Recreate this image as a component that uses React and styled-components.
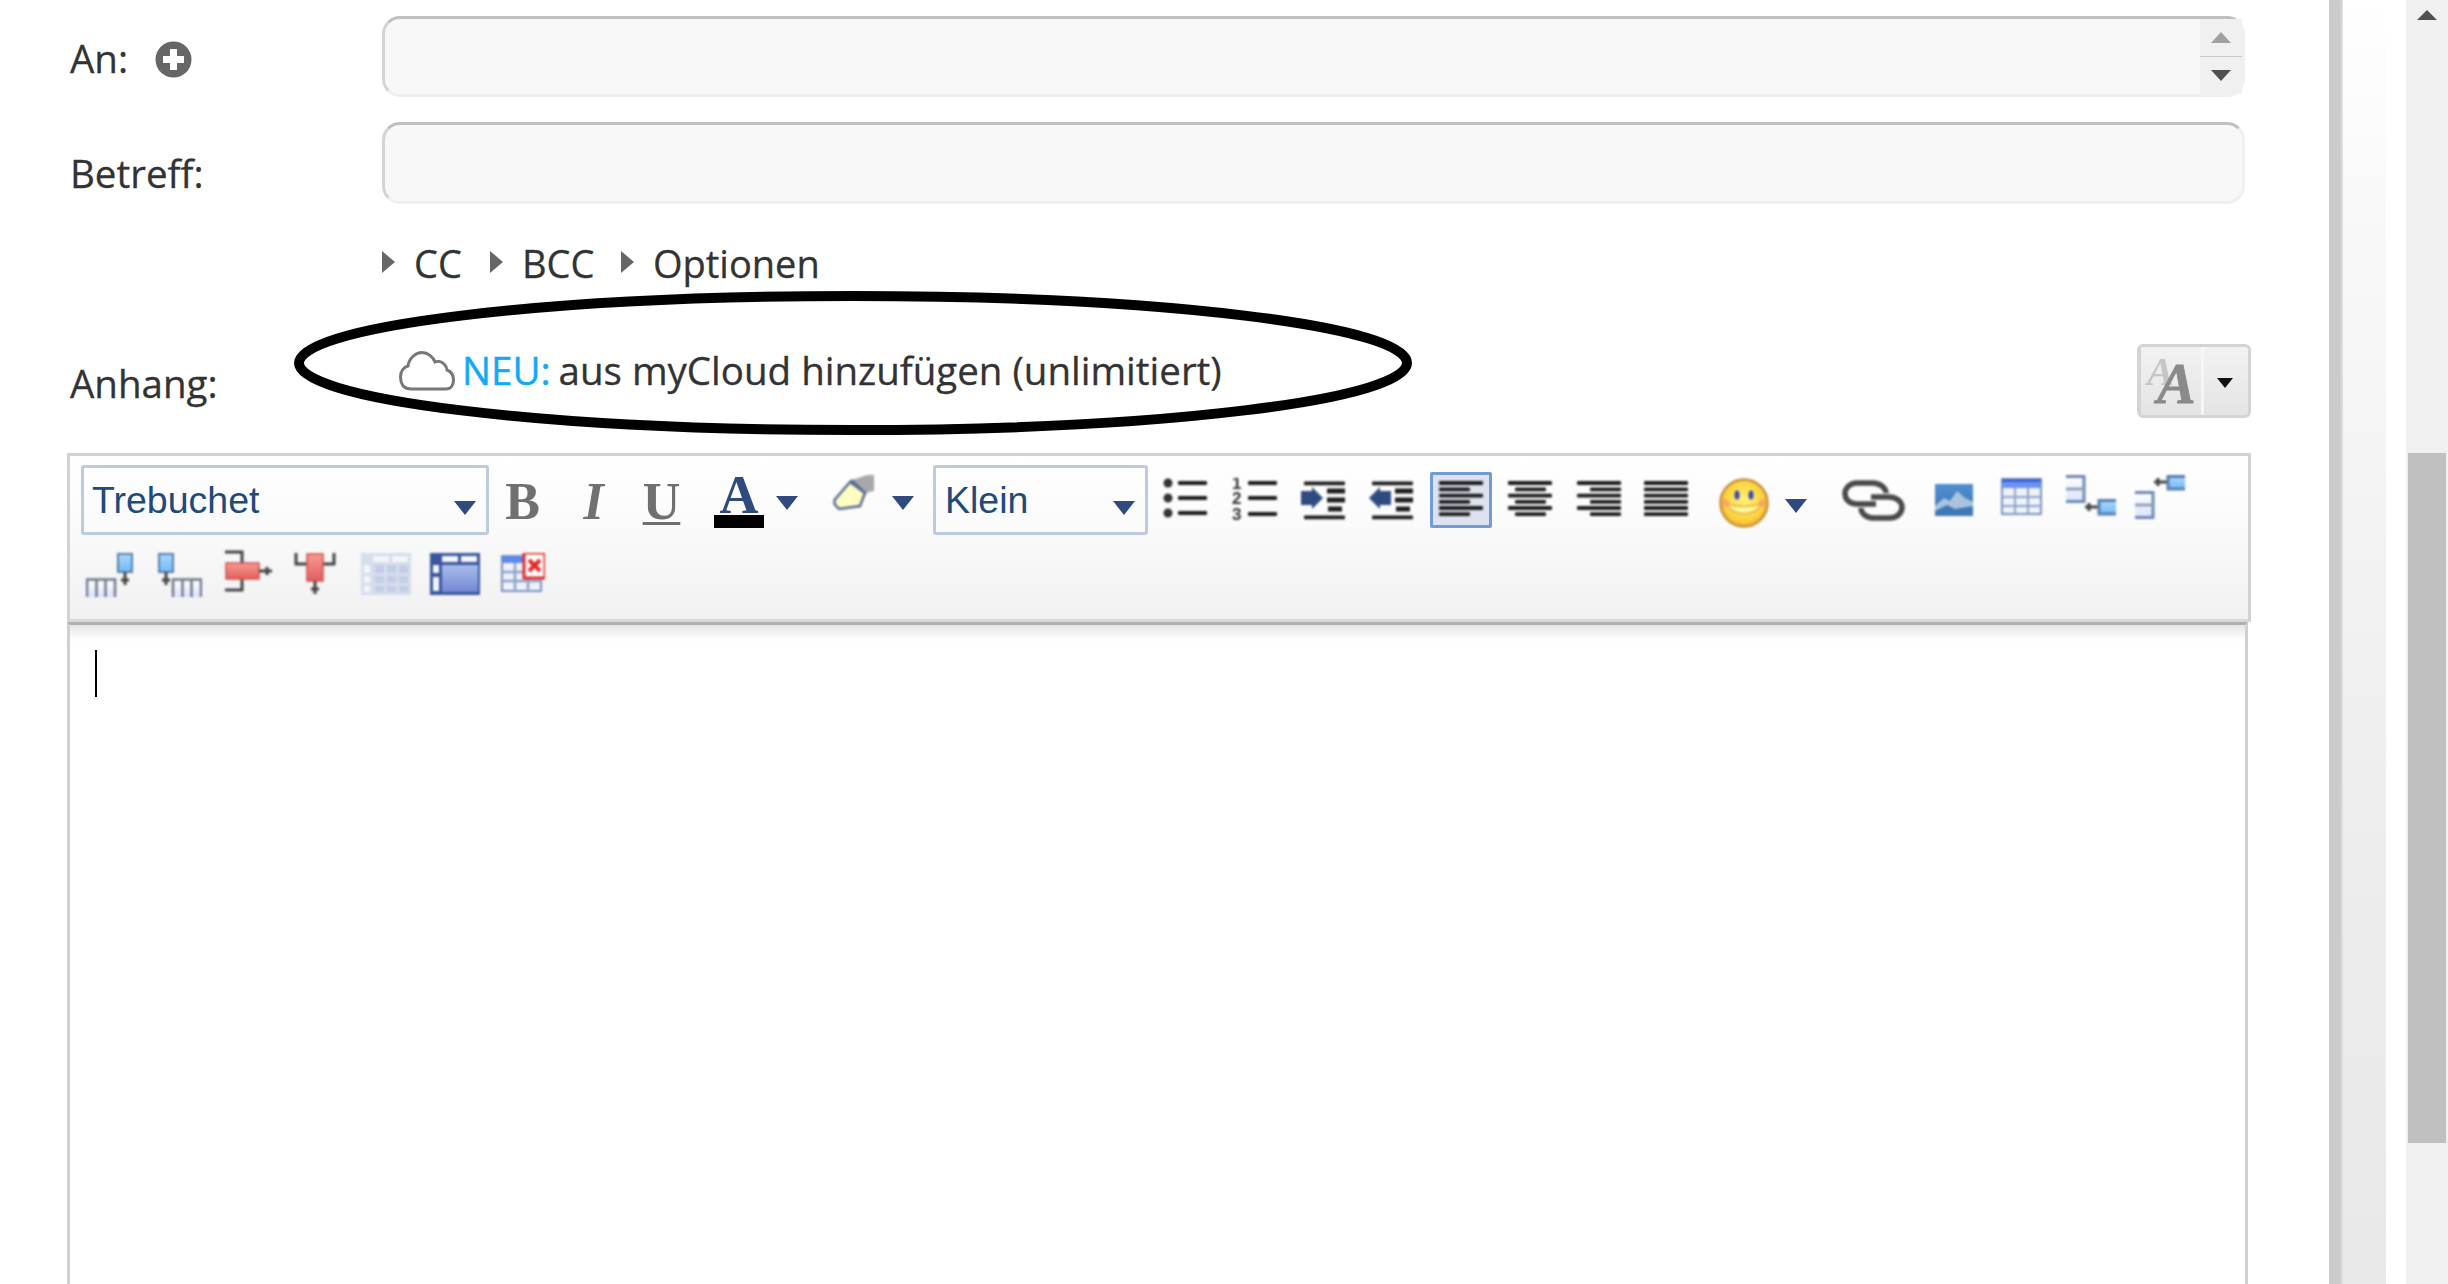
import React from 'react';
import styled, { createGlobalStyle } from 'styled-components';

const GlobalStyle = createGlobalStyle`
  html, body {
    margin: 0;
    padding: 0;
    background: #fff;
    overflow: hidden;
  }
`;

const Page = styled.div`
  display: flex;
  width: 2448px;
  height: 1284px;
  overflow: hidden;
  position: relative;
  font-family: 'Open Sans', 'Liberation Sans', sans-serif;
  color: #333;
`;

const Main = styled.div`
  flex: 0 0 2329px;
  box-sizing: border-box;
  padding: 16px 78px 0 67px;
  display: flex;
  flex-direction: column;
`;

const Strip = styled.div`
  flex: 0 0 14px;
  background: linear-gradient(90deg, #cbcbcb 0, #cbcbcb 11px, #e4e4e4 100%);
`;

const SidePanel = styled.div`
  flex: 0 0 43px;
  background: linear-gradient(180deg, #fff 0, #f9f9f9 200px, #ececec 900px, #e9e9e9 100%);
`;

const Gutter = styled.div`
  flex: 0 0 20px;
`;

const Scrollbar = styled.div`
  flex: 0 0 42px;
  background: #f0f0f0;
  padding-top: 10px;
  box-sizing: border-box;
`;

const ScrollArrow = styled.div`
  width: 0;
  height: 0;
  margin-left: 11px;
  border-left: 10px solid transparent;
  border-right: 10px solid transparent;
  border-bottom: 10px solid #505050;
`;

const ScrollThumb = styled.div`
  width: 38px;
  height: 690px;
  margin: 433px 0 0 2px;
  background: #c0c0c0;
`;

const Row = styled.div`
  display: grid;
  grid-template-columns: 315px 1fr;
  margin-top: ${(p) => p.$top || 0}px;
`;

const Label = styled.div`
  display: flex;
  align-items: flex-start;
  gap: 27px;
  padding: ${(p) => p.$pad || 0}px 0 0 3px;
  font-size: 38.5px;
  line-height: 46px;
  color: #333;
  -webkit-text-stroke: 0.3px #333;
`;

const PlusIcon = styled.svg`
  width: 37px;
  height: 37px;
  margin-top: 6px;
`;

const InputBox = styled.div`
  position: relative;
  box-sizing: border-box;
  width: 1863px;
  height: ${(p) => p.$h}px;
  margin-right: 6px;
  background: #f8f8f8;
  border-radius: 18px;
  border: 3px solid #f0f0f0;
  border-top-color: #c0c0c0;
  border-left-color: #d4d4d4;
`;

const Spinner = styled.div`
  position: absolute;
  top: 0;
  right: 0;
  bottom: 0;
  width: 42px;
  background: #f0f0f0;
  display: flex;
  flex-direction: column;
  align-items: center;
`;

const SpinHalf = styled.div`
  flex: 1;
  align-self: stretch;
  display: flex;
  align-items: center;
  justify-content: center;
  border-top: ${(p) => (p.$divider ? '1px solid #c8c8c8' : 'none')};
`;

const SpinArrow = styled.div`
  width: 0;
  height: 0;
  border-left: 10px solid transparent;
  border-right: 10px solid transparent;
  border-bottom: ${(p) => (p.$up ? '11px solid #a0a0a0' : 'none')};
  border-top: ${(p) => (p.$up ? 'none' : '11px solid #505050')};
`;

const Options = styled.div`
  display: flex;
  align-items: center;
  margin: 39px 0 0 315px;
  height: 40px;
  font-size: 38px;
  line-height: 40px;
  color: #333;
  -webkit-text-stroke: 0.3px #333;
`;

const OptionItem = styled.div`
  flex: 0 0 ${(p) => p.$w}px;
  display: flex;
  align-items: center;
`;

const Caret = styled.span`
  width: 0;
  height: 0;
  margin: -2px 19px 0 0;
  border-top: 11px solid transparent;
  border-bottom: 11px solid transparent;
  border-left: 13px solid #666;
`;

const AttachRow = styled.div`
  display: grid;
  grid-template-columns: 315px 1fr auto;
  margin-top: 61px;
  height: 74px;
`;

const AttachLink = styled.div`
  display: flex;
  align-items: flex-start;
  padding: 0 0 0 17px;
  margin-top: 3px;
  font-size: 38.5px;
  line-height: 46px;
  color: #333;
  -webkit-text-stroke: 0.3px #333;
`;

const CloudIcon = styled.svg`
  width: 56px;
  height: 40px;
  margin: 4px 7px 0 0;
  filter: blur(0.5px);
`;

const New = styled.span`
  color: #12a9f7;
  -webkit-text-stroke: 0.4px #12a9f7;
  margin-right: 8px;
`;

const FontButton = styled.div`
  box-sizing: border-box;
  width: 114px;
  height: 74px;
  display: flex;
  border: 3px solid #d4d4d4;
  border-radius: 6px;
  background: linear-gradient(180deg, #f2f2f2, #e4e4e4);
`;

const FontFace = styled.div`
  flex: 0 0 61px;
  position: relative;
  border-right: 3px solid #f6f6f6;
  box-shadow: 1px 0 0 #d4d4d4 inset;
  filter: blur(0.7px);
`;

const FaceLetter = styled.span`
  position: absolute;
  left: ${(p) => p.$left}px;
  top: ${(p) => p.$at}px;
  font-family: 'Liberation Serif', serif;
  font-weight: bold;
  font-style: italic;
  font-size: ${(p) => p.$size}px;
  line-height: 1;
  color: ${(p) => p.$color};
  -webkit-text-stroke: ${(p) => p.$weight || 0}px ${(p) => p.$color};
`;

const FontArrow = styled.div`
  margin: 31px 0 0 13px;
  width: 0;
  height: 0;
  border-left: 8px solid transparent;
  border-right: 8px solid transparent;
  border-top: 10px solid #111;
`;

const Toolbar = styled.div`
  box-sizing: border-box;
  margin-top: 35px;
  height: 169px;
  border: 3px solid #d2d2d2;
  border-bottom-color: #d8d8d8;
  background: linear-gradient(180deg, #fff 0, #fafafa 45%, #f1f1f1 100%);
  padding: 9px 0 0 11px;
`;

const ToolRow = styled.div`
  display: flex;
  align-items: flex-start;
  height: ${(p) => p.$h}px;
  margin-top: ${(p) => p.$top || 0}px;
`;

const Select = styled.div`
  box-sizing: border-box;
  flex: 0 0 ${(p) => p.$w}px;
  margin-left: ${(p) => p.$gap || 0}px;
  height: 70px;
  border: 3px solid #bccbe0;
  border-radius: 3px;
  display: flex;
  align-items: flex-start;
  justify-content: space-between;
  padding: 0 10px 0 ${(p) => p.$pad}px;
  font-family: 'Liberation Sans', Arial, sans-serif;
  font-size: 37.5px;
  line-height: 64px;
  color: #204a78;
`;

const DropArrow = styled.span`
  flex: 0 0 auto;
  display: block;
  width: 0;
  height: 0;
  margin-left: ${(p) => p.$gap || 0}px;
  margin-top: ${(p) => p.$top || 0}px;
  border-left: 11px solid transparent;
  border-right: 11px solid transparent;
  border-top: 14px solid #2f4a7f;
  filter: blur(0.5px);
`;

const Letter = styled.span`
  flex: 0 0 ${(p) => p.$w}px;
  min-width: 0;
  display: flex;
  justify-content: center;
  margin-left: ${(p) => p.$gap}px;
  margin-top: ${(p) => p.$top}px;
  font-family: 'Liberation Serif', serif;
  font-weight: bold;
  font-style: ${(p) => (p.$italic ? 'italic' : 'normal')};
  text-decoration: ${(p) => (p.$under ? 'underline' : 'none')};
  text-decoration-thickness: 3px;
  text-underline-offset: 3px;
  font-size: 52px;
  line-height: 52px;
  color: #707070;
  filter: blur(0.7px);
`;

const ColorTool = styled.div`
  flex: 0 0 50px;
  margin-left: 35px;
  display: flex;
  flex-direction: column;
  align-items: center;
`;

const ColorLetter = styled.span`
  font-family: 'Liberation Serif', serif;
  font-weight: bold;
  font-size: 54px;
  line-height: 54px;
  margin-top: 3px;
  color: #2f4a7f;
  filter: blur(0.6px);
`;

const ColorBar = styled.div`
  align-self: stretch;
  height: 13px;
  margin-top: -7px;
  background: #000;
`;

const Glyph = styled.svg`
  flex: 0 0 auto;
  display: block;
  margin-left: ${(p) => p.$gap || 0}px;
  margin-top: ${(p) => p.$top || 0}px;
  filter: blur(0.8px);
`;

const LineSvg = styled.svg`
  display: block;
  filter: blur(0.8px);
`;

const ActiveBox = styled.div`
  box-sizing: border-box;
  flex: 0 0 62px;
  height: 56px;
  margin: 7px 0 0 16px;
  border: 3px solid #6f9bd6;
  border-radius: 2px;
  background: #dde2ee;
  padding: 5px 0 0 6px;
`;

const Editor = styled.div`
  flex: 1;
  box-sizing: border-box;
  width: 2181px;
  border: 3px solid #d0d0d0;
  border-top-color: #b0b0b0;
  border-bottom: none;
  padding: 25px;
  background: linear-gradient(180deg, #e6e6e6 0, #fdfdfd 14px, #fff 20px);
`;

const TextCursor = styled.div`
  width: 2px;
  height: 47px;
  background: #000;
`;

const Ring = styled.svg`
  position: absolute;
  left: 285px;
  top: 282px;
  width: 1136px;
  height: 163px;
  pointer-events: none;
`;

// svg helper: viewBox is in screen pixels
const Ico = ({ w, h, gap, top, children }) => (
  <Glyph $gap={gap} $top={top} width={w} height={h} viewBox={`0 0 ${w} ${h}`}>
    {children}
  </Glyph>
);

const Lines = ({ kind }) => {
  const ys = [3, 9.4, 15.6, 21.8, 28, 34.2];
  return (
    <g fill="#1c1c1c">
      {ys.map((y, i) => {
        const short = i % 2 === 1 && kind !== 'justify';
        const w = short ? 31 : 44;
        const x = !short ? 0 : kind === 'left' ? 0 : kind === 'center' ? 7 : 13;
        return <rect key={y} x={x} y={y - 1.9} width={w} height={3.8} rx={1} />;
      })}
    </g>
  );
};

const Defs = () => (
  <svg width="0" height="0" style={{ position: 'absolute' }}>
    <defs>
      <linearGradient id="paleBox" x1="0" y1="0" x2="0" y2="1">
        <stop offset="0" stopColor="#ffffff" />
        <stop offset="1" stopColor="#dbe4fb" />
      </linearGradient>
      <linearGradient id="blueBox" x1="0" y1="0" x2="0" y2="1">
        <stop offset="0" stopColor="#a9d8ff" />
        <stop offset="1" stopColor="#72baf5" />
      </linearGradient>
      <linearGradient id="redBox" x1="0" y1="0" x2="0" y2="1">
        <stop offset="0" stopColor="#f79a92" />
        <stop offset="1" stopColor="#e35f5a" />
      </linearGradient>
      <linearGradient id="sky" x1="0" y1="0" x2="0" y2="1">
        <stop offset="0" stopColor="#4f8fcf" />
        <stop offset="1" stopColor="#3a76b8" />
      </linearGradient>
      <linearGradient id="deepBlue" x1="0" y1="0" x2="0" y2="1">
        <stop offset="0" stopColor="#a9bcec" />
        <stop offset="1" stopColor="#7388d3" />
      </linearGradient>
      <radialGradient id="smile" cx="0.5" cy="0.45" r="0.6">
        <stop offset="0" stopColor="#fff07a" />
        <stop offset="0.7" stopColor="#fbd23e" />
        <stop offset="1" stopColor="#f0a52a" />
      </radialGradient>
    </defs>
  </svg>
);

const BulletsIcon = () => (
  <Ico w={47} h={44} gap={15} top={13}>
    {[5, 20, 35].map((y) => (
      <g key={y}>
        <circle cx={5} cy={y} r={4.5} fill="#333" />
        <rect x={15} y={y - 1.9} width={29} height={3.8} rx={1} fill="#1c1c1c" />
      </g>
    ))}
  </Ico>
);

const NumbersIcon = () => (
  <Ico w={45} h={46} gap={22} top={13}>
    {[
      ['1', 5],
      ['2', 20],
      ['3', 36],
    ].map(([n, y]) => (
      <g key={n}>
        <text x={0} y={y + 6} fontFamily="Liberation Sans" fontWeight="bold" fontSize="17" fill="#333">
          {n}
        </text>
        <rect x={16} y={y - 1.9} width={29} height={3.8} rx={1} fill="#1c1c1c" />
      </g>
    ))}
  </Ico>
);

const IndentIcon = ({ gap, out }) => (
  <Ico w={45} h={40} gap={gap} top={15}>
    <g fill="#1c1c1c">
      <rect x={3} y={1.5} width={41} height={3.8} rx={1} />
      <rect x={3} y={35.5} width={41} height={3.8} rx={1} />
      <rect x={26} y={8.5} width={18} height={5} />
      <rect x={26} y={17.5} width={18} height={5} />
      <rect x={27} y={26.5} width={14} height={5} />
    </g>
    <polygon
      fill="#2f4a7f"
      points={out ? '0,18 11,7 11,11 22,11 22,25 11,25 11,29' : '0,11 11,11 11,7 22,18 11,29 11,25 0,25'}
    />
  </Ico>
);

const HighlightIcon = () => (
  <Ico w={41} h={36} gap={35} top={9}>
    <path d="M1.5 26 L17 8 L32 19 L27 32 L6 35 L1.5 30 Z" fill="#fdfdc0" stroke="#5a6d94" strokeWidth={2.5} />
    <path d="M19 6 L34 1 L41 1 L41 17 L32 19 Z" fill="#a8a8a8" />
    <path d="M18 6 L33 20" stroke="#5a6d94" strokeWidth={3} />
  </Ico>
);

const SmileyIcon = () => (
  <Ico w={50} h={50} gap={31} top={13}>
    <circle cx={25} cy={25} r={23.5} fill="url(#smile)" stroke="#c99236" strokeWidth={2.5} />
    <ellipse cx={18} cy={17} rx={2.5} ry={4.5} fill="#3a4bb0" />
    <ellipse cx={32} cy={17} rx={2.5} ry={4.5} fill="#3a4bb0" />
    <path d="M9 26 C15 29 35 29 41 26 C39 39 11 39 9 26 Z" fill="#fff59a" stroke="#e0a02c" strokeWidth={1.2} />
    <circle cx={6} cy={25} r={4} fill="#f59a62" opacity={0.7} />
    <circle cx={44} cy={25} r={4} fill="#f59a62" opacity={0.7} />
  </Ico>
);

const LinkIcon = () => (
  <Ico w={63} h={41} gap={35} top={15}>
    <g fill="none" stroke="#4a4a4a" strokeWidth={5.5}>
      <path d="M34 24 H15 C7 24 3 19 3 13.5 C3 8 8 3 15 3 H31 C38 3 44 8 44 13" />
      <path d="M29 17 H47 C55 17 60 22 60 27.5 C60 33 55 38 47 38 H31 C24 38 19 33 19 28" />
    </g>
  </Ico>
);

const ImageIcon = () => (
  <Ico w={38} h={32} gap={30} top={19}>
    <rect width={38} height={32} fill="url(#sky)" />
    <path d="M0 22 L9 14 L15 17 L22 7 L30 14 L38 18 L38 32 L0 32 Z" fill="#a9c4de" />
    <path d="M0 27 L12 21 L20 25 L38 22 L38 32 L0 32 Z" fill="#3f78b4" />
  </Ico>
);

const TableIcon = ({ gap }) => (
  <Ico w={41} h={38} gap={gap} top={13}>
    <rect x={1} y={1} width={39} height={35} fill="#eef2fb" stroke="#7b93bf" strokeWidth={2} />
    <rect x={1} y={1} width={39} height={9} fill="#6c93ee" />
    <rect x={1} y={1} width={39} height={3} fill="#3d62d8" />
    <path d="M14 10 V36 M27 10 V36 M1 19 H40 M1 28 H40" stroke="#8ea3c9" strokeWidth={2} />
  </Ico>
);

const RowBeforeIcon = () => (
  <Ico w={50} h={42} gap={24} top={10}>
    <path d="M0 1.5 H18 V26.5 H0" fill="url(#paleBox)" stroke="#6d89b3" strokeWidth={3} />
    <path d="M0 14 H18" stroke="#8ea0bb" strokeWidth={3} />
    <path d="M19 32 H32 M23 28 V36" stroke="#444" strokeWidth={3} />
    <path d="M50 25.5 H33 V39 H50" fill="url(#blueBox)" stroke="#5a80ae" strokeWidth={3} />
  </Ico>
);

const RowAfterIcon = () => (
  <Ico w={50} h={44} gap={19} top={10}>
    <path d="M0 17.5 H18 V42.5 H0" fill="url(#paleBox)" stroke="#6d89b3" strokeWidth={3} />
    <path d="M0 30 H18" stroke="#8ea0bb" strokeWidth={3} />
    <path d="M19 7 H32 M23 3 V11" stroke="#444" strokeWidth={3} />
    <path d="M50 1.5 H33 V14 H50" fill="url(#blueBox)" stroke="#5a80ae" strokeWidth={3} />
  </Ico>
);

const ColLeftIcon = () => (
  <Ico w={47} h={44} gap={5} top={3}>
    <path d="M1 44 V26.5 H29 V44 M10.5 27 V44 M19.5 27 V44" fill="url(#paleBox)" stroke="#707a8a" strokeWidth={2.5} />
    <rect x={32} y={1} width={14} height={18} fill="url(#blueBox)" stroke="#5a80ae" strokeWidth={2} />
    <path d="M39 19 V32 M35 27 H43" stroke="#444" strokeWidth={3} />
  </Ico>
);

const ColRightIcon = () => (
  <Ico w={44} h={44} gap={25} top={3}>
    <path d="M15 44 V26.5 H43 V44 M24.5 27 V44 M33.5 27 V44" fill="url(#paleBox)" stroke="#707a8a" strokeWidth={2.5} />
    <rect x={1} y={1} width={14} height={18} fill="url(#blueBox)" stroke="#5a80ae" strokeWidth={2} />
    <path d="M8 19 V32 M4 27 H12" stroke="#444" strokeWidth={3} />
  </Ico>
);

const DelColIcon = () => (
  <Ico w={48} h={42} gap={23} top={0}>
    <path d="M0 2 H17 V13 M17 29 V40 H0" fill="none" stroke="#444" strokeWidth={3} />
    <rect x={1} y={13} width={33} height={16} fill="url(#redBox)" stroke="#d0524e" strokeWidth={1.5} />
    <path d="M34 21 H47 M42 17 V25" stroke="#444" strokeWidth={3} />
  </Ico>
);

const DelRowIcon = () => (
  <Ico w={42} h={41} gap={21} top={3}>
    <path d="M2 0 V11 H13 M29 11 H40 V0" fill="none" stroke="#444" strokeWidth={3} />
    <rect x={13} y={1} width={16} height={27} fill="url(#redBox)" stroke="#d0524e" strokeWidth={1.5} />
    <path d="M21 28 V41 M17 36 H25" stroke="#444" strokeWidth={3} />
  </Ico>
);

const GridPaleIcon = () => (
  <Ico w={50} h={42} gap={25} top={3}>
    <rect width={50} height={42} fill="#d6dded" />
    <path d="M12 3 H28 V9 H12 Z M31 3 H47 V9 H31 Z M3 12 H9 V20 H3 Z M3 23 H9 V30 H3 Z M3 33 H9 V39 H3 Z" fill="#f3f5fa" />
    <path d="M14 12 H23 V20 H14 Z M26 12 H35 V20 H26 Z M38 12 H47 V20 H38 Z M14 23 H23 V30 H14 Z M26 23 H35 V30 H26 Z M38 23 H47 V30 H38 Z M14 33 H23 V39 H14 Z M26 33 H35 V39 H26 Z M38 33 H47 V39 H38 Z" fill="#c3cee4" />
  </Ico>
);

const GridHeadIcon = () => (
  <Ico w={50} h={42} gap={19} top={3}>
    <rect width={50} height={42} fill="#3a569f" />
    <path d="M12 3 H28 V9 H12 Z M31 3 H47 V9 H31 Z M3 12 H9 V20 H3 Z M3 24 H9 V38 H3 Z" fill="#f3f5fa" />
    <rect x={12} y={12} width={36} height={27} fill="url(#deepBlue)" />
  </Ico>
);

const GridDelIcon = () => (
  <Ico w={44} h={40} gap={21} top={3}>
    <rect x={1} y={3} width={39} height={35} fill="#eef2fb" stroke="#7b93bf" strokeWidth={2} />
    <rect x={1} y={3} width={39} height={7} fill="#5f8aeb" />
    <path d="M14 10 V38 M27 10 V38 M1 19 H40 M1 28 H40" stroke="#8ea3c9" strokeWidth={2.5} />
    <rect x={23} y={0} width={21} height={25} fill="#fff" stroke="#e12a2a" strokeWidth={3} />
    <path d="M28 7 L39 18 M39 7 L28 18" stroke="#e12a2a" strokeWidth={4} />
  </Ico>
);

const App = () => (
  <Page>
    <GlobalStyle />
    <Defs />
    <Main>
      <Row>
        <Label $pad={19}>
          An:
          <PlusIcon viewBox="0 0 37 37">
            <circle cx="18.5" cy="18.5" r="18" fill="#666" />
            <path d="M18.5 8 V29 M8 18.5 H29" stroke="#fff" strokeWidth="7" />
          </PlusIcon>
        </Label>
        <InputBox $h={81}>
          <Spinner>
            <SpinHalf>
              <SpinArrow $up />
            </SpinHalf>
            <SpinHalf $divider>
              <SpinArrow />
            </SpinHalf>
          </Spinner>
        </InputBox>
      </Row>
      <Row $top={25}>
        <Label $pad={28}>Betreff:</Label>
        <InputBox $h={82} />
      </Row>
      <Options>
        <OptionItem $w={108}>
          <Caret />
          CC
        </OptionItem>
        <OptionItem $w={131}>
          <Caret />
          BCC
        </OptionItem>
        <OptionItem $w={240}>
          <Caret />
          Optionen
        </OptionItem>
      </Options>
      <AttachRow>
        <Label $pad={16}>Anhang:</Label>
        <AttachLink>
          <CloudIcon viewBox="0 0 56 40">
            <path
              d="M12 38 C4 38 1.5 32 1.5 26 C1.5 20 5 16 9 15 C10 7 17 1.5 23 1.5 C29 1.5 34 6 36 11 C38 10 42 10 45 13 C47 15 48 17 48 19 C53 21 54.5 25 54.5 29 C54.5 34 52 38 47 38 Z"
              fill="none"
              stroke="#777"
              strokeWidth="3"
            />
          </CloudIcon>
          <New>NEU:</New>
          aus myCloud hinzufügen (unlimitiert)
        </AttachLink>
        <FontButton>
          <FontFace>
            <FaceLetter $left={7} $at={5} $size={40} $color="#c6c6c6">
              A
            </FaceLetter>
            <FaceLetter $left={17} $at={8} $size={58} $color="#8a8a8a" $weight={0.8}>
              A
            </FaceLetter>
          </FontFace>
          <FontArrow />
        </FontButton>
      </AttachRow>
      <Toolbar>
        <ToolRow $h={70}>
          <Select $w={408} $pad={8}>
            Trebuchet
            <DropArrow $top={33} />
          </Select>
          <Letter $w={31} $gap={18} $top={11}>
            B
          </Letter>
          <Letter $w={27} $gap={42} $top={11} $italic>
            I
          </Letter>
          <Letter $w={35} $gap={37} $top={11} $under>
            U
          </Letter>
          <ColorTool>
            <ColorLetter>A</ColorLetter>
            <ColorBar />
          </ColorTool>
          <DropArrow $gap={12} $top={31} />
          <HighlightIcon />
          <DropArrow $gap={18} $top={31} />
          <Select $w={215} $gap={19} $pad={9}>
            Klein
            <DropArrow $top={33} />
          </Select>
          <BulletsIcon />
          <NumbersIcon />
          <IndentIcon gap={24} />
          <IndentIcon gap={23} out />
          <ActiveBox>
            <LineSvg width={44} height={38} viewBox="0 0 44 38">
              <Lines kind="left" />
            </LineSvg>
          </ActiveBox>
          <Ico w={44} h={38} gap={16} top={15}>
            <Lines kind="center" />
          </Ico>
          <Ico w={44} h={38} gap={25} top={15}>
            <Lines kind="right" />
          </Ico>
          <Ico w={44} h={38} gap={23} top={15}>
            <Lines kind="justify" />
          </Ico>
          <SmileyIcon />
          <DropArrow $gap={16} $top={34} />
          <LinkIcon />
          <ImageIcon />
          <TableIcon gap={28} />
          <RowBeforeIcon />
          <RowAfterIcon />
        </ToolRow>
        <ToolRow $h={60} $top={15}>
          <ColLeftIcon />
          <ColRightIcon />
          <DelColIcon />
          <DelRowIcon />
          <GridPaleIcon />
          <GridHeadIcon />
          <GridDelIcon />
        </ToolRow>
      </Toolbar>
      <Editor>
        <TextCursor />
      </Editor>
    </Main>
    <Strip />
    <SidePanel />
    <Gutter />
    <Scrollbar>
      <ScrollArrow />
      <ScrollThumb />
    </Scrollbar>
    <Ring viewBox="0 0 1136 163">
      <ellipse cx="568" cy="81" rx="554" ry="67" fill="none" stroke="#000" strokeWidth="10" />
    </Ring>
  </Page>
);

export default App;
